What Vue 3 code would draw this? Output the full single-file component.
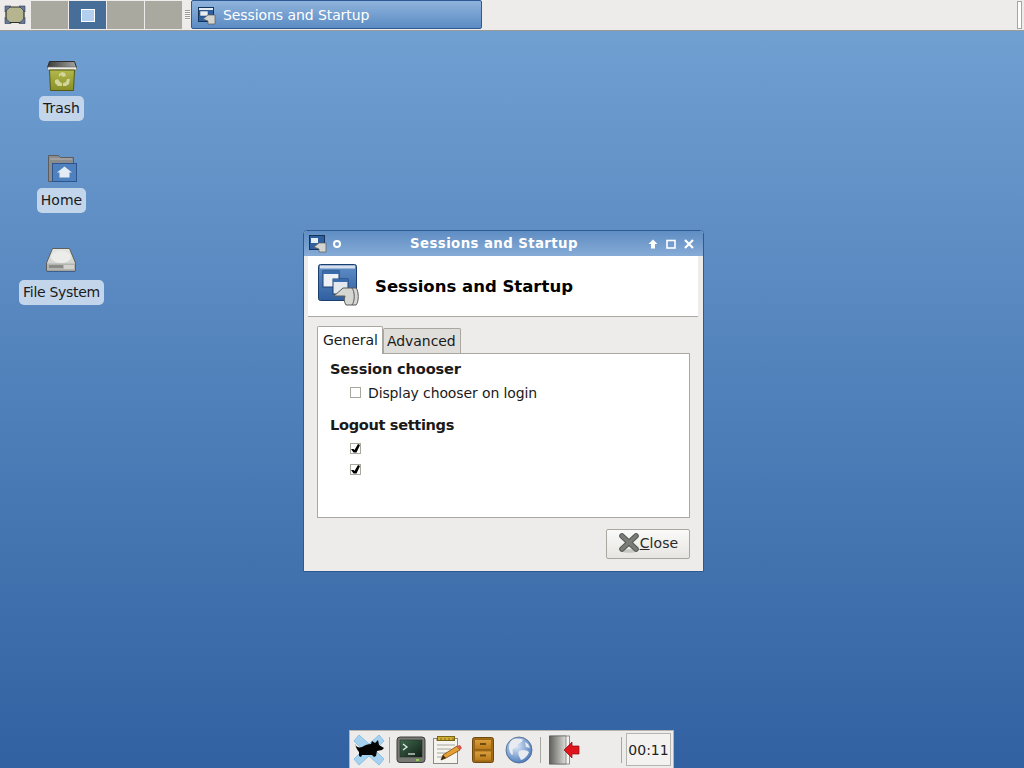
<script setup>
const workspaces = [{ active: false }, { active: true }, { active: false }, { active: false }]

const desktopIcons = [
  { label: 'Trash', kind: 'trash' },
  { label: 'Home', kind: 'home' },
  { label: 'File System', kind: 'disk' }
]
</script>

<template>
  <div class="desktop">
    <!-- top panel -->
    <header class="top-panel">
      <div class="menu-btn">
        <svg width="22" height="20" viewBox="0 0 22 20">
          <rect x="2" y="2" width="18" height="15.500" rx="4" fill="#b5b690" stroke="#2f3128" stroke-width="1.200" />
          <path d="M1 1h6L1 7zM21 1h-6l6 6zM1 18.500h6l-6-6zM21 18.500h-6l6-6z" fill="#66799a" stroke="#2e3a4e" stroke-width=".6" />
        </svg>
      </div>
      <div class="pager">
        <div v-for="(ws, i) in workspaces" :key="i" class="ws" :class="{ active: ws.active }">
          <span v-if="ws.active" class="ws-win"></span>
        </div>
      </div>
      <div class="grip"><i v-for="n in 5" :key="n"></i></div>
      <div class="task">
        <svg width="18" height="18" viewBox="0 0 18 18">
          <rect x=".5" y=".5" width="15" height="14" fill="#2f5f9e" stroke="#16335a" />
          <rect x="1" y="1" width="14" height="2" fill="#e6ebf2" />
          <rect x="2" y="4" width="8" height="5" fill="#e8edf3" stroke="#20406b" stroke-width=".5" />
          <path d="M5 12l5-4h7v9h-7v-3z" fill="#d4d4d0" stroke="#5a5a58" stroke-width=".7" />
        </svg>
        <span>Sessions and Startup</span>
      </div>
      <div class="panel-end"></div>
    </header>

    <!-- desktop icons -->
    <div class="icons">
      <div v-for="icon in desktopIcons" :key="icon.label" class="desk-icon">
        <svg v-if="icon.kind === 'trash'" width="34" height="34" viewBox="0 0 34 34">
          <defs>
            <linearGradient id="bin" x1="0" x2="0" y1="0" y2="1">
              <stop offset="0" stop-color="#b2b84a" />
              <stop offset="1" stop-color="#8a9028" />
            </linearGradient>
            <linearGradient id="binIn" x1="0" x2="1" y1="0" y2="0">
              <stop offset="0" stop-color="#3a3b38" />
              <stop offset="1" stop-color="#a5a6a2" />
            </linearGradient>
          </defs>
          <path d="M4.500 2.500h25l2 6h-29z" fill="url(#binIn)" stroke="#2c2c2a" />
          <rect x="2.500" y="8" width="29" height="3" rx="1" fill="#efefeb" stroke="#6f6f6a" stroke-width=".7" />
          <path d="M4.500 11h25l-1 20.500h-23z" fill="url(#bin)" stroke="#565a12" />
          <path d="M14 15l3-2 3 1 1 3-3 1-2-2-2 2zM10 21l3-1 2 3 2 1v3h-4l-3-3zM25 20l-1 5-3 2h-3v-3l3-1 1-3z" fill="#d2d69a" />
        </svg>
        <svg v-else-if="icon.kind === 'home'" width="34" height="34" viewBox="0 0 34 34">
          <path d="M3.500 4.500h10l2 2h13v24h-25z" fill="#8b8c8d" stroke="#5c5d5e" />
          <path d="M5 8h22" stroke="#b4b4b2" />
          <rect x="7.500" y="12.500" width="24" height="18" fill="#4f81bf" stroke="#2c5590" />
          <path d="M19.500 15.500l7.500 6h-2.500v5h-10v-5H12z" fill="#e3ebf5" />
        </svg>
        <svg v-else width="34" height="34" viewBox="0 0 34 34">
          <defs>
            <linearGradient id="hd" x1="0" x2="0" y1="0" y2="1">
              <stop offset="0" stop-color="#e6e6e3" />
              <stop offset="1" stop-color="#c9c9c5" />
            </linearGradient>
          </defs>
          <path d="M8.500 5.500h17l6 14.500v8h-29v-8z" fill="url(#hd)" stroke="#5e5e5b" stroke-linejoin="round" />
          <ellipse cx="17" cy="14" rx="10" ry="6" fill="#ececea" />
          <path d="M3 20.500h28v7H3z" fill="#b3b3af" />
          <rect x="5" y="22" width="14" height="3" fill="#8a8a86" />
          <path d="M21 22v4M23 22v4M25 22v4M27 22v4M29 22v4" stroke="#f0f0ed" />
          <path d="M3 28.500h28" stroke="#3d5f8e" />
        </svg>
        <span class="desk-label" :class="icon.kind">{{ icon.label }}</span>
      </div>
    </div>

    <!-- settings window -->
    <section class="window">
      <div class="titlebar">
        <div class="tb-left">
          <svg width="18" height="18" viewBox="0 0 18 18">
            <rect x=".5" y=".5" width="15" height="14" fill="#2f5f9e" stroke="#16335a" />
            <rect x="2" y="3" width="7" height="5" fill="#e8edf3" />
            <path d="M5 12l5-4h7v9h-7v-3z" fill="#d4d4d0" stroke="#5a5a58" stroke-width=".7" />
          </svg>
          <span class="tb-dot"></span>
        </div>
        <span class="tb-title">Sessions and Startup</span>
        <div class="tb-right">
          <svg width="12" height="12" viewBox="0 0 12 12"><path d="M6 1.500l4.500 4.500H8v4.500H4V6H1.500z" fill="#fff" /></svg>
          <svg width="12" height="12" viewBox="0 0 12 12"><rect x="2" y="2.500" width="8" height="7.500" fill="none" stroke="#fff" stroke-width="1.600" /></svg>
          <svg width="12" height="12" viewBox="0 0 12 12"><path d="M2 2l8 8M10 2l-8 8" stroke="#fff" stroke-width="2.200" /></svg>
        </div>
      </div>
      <div class="content">
        <div class="head">
          <svg width="44" height="46" viewBox="0 0 44 46">
            <defs>
              <linearGradient id="headBlue" x1="0" x2="0" y1="0" y2="1">
                <stop offset="0" stop-color="#5f8ec8" />
                <stop offset="1" stop-color="#2f5f9f" />
              </linearGradient>
            </defs>
            <rect x="1.500" y="1.500" width="38" height="36" rx="2" fill="url(#headBlue)" stroke="#1d3f6f" />
            <rect x="3" y="2.500" width="35" height="3" fill="#d7e0ea" />
            <rect x="6" y="8" width="16" height="16" fill="#eef1f5" stroke="#1d3f6f" />
            <rect x="6" y="8" width="16" height="3" fill="#3a6cad" />
            <rect x="16" y="16" width="15" height="15" fill="#e4e9ef" stroke="#1d3f6f" />
            <rect x="16" y="16" width="15" height="3" fill="#3a6cad" />
            <path d="M17 33l9-8h13c3 3 3 14 0 17H29c-2-3-2-6-1-9z" fill="#d6d6d2" stroke="#5b5b58" />
            <path d="M35 25c3 4 3 13 0 17" fill="none" stroke="#5b5b58" />
          </svg>
          <h1>Sessions and Startup</h1>
        </div>
        <div class="body">
          <div class="tabs">
            <div class="tab current">General</div>
            <div class="tab">Advanced</div>
          </div>
          <div class="tab-page">
            <h2 class="first-title">Session chooser</h2>
            <div class="check-row">
              <span class="check"></span>
              <span>Display chooser on login</span>
            </div>
            <h2 class="second">Logout settings</h2>
            <div class="check-row first">
              <span class="check on">
                <svg width="9" height="9" viewBox="0 0 9 9"><path d="M0 5h2.500l1 1L7 0l2 1-3.500 7.500h-3z" fill="#000" /></svg>
              </span>
            </div>
            <div class="check-row small">
              <span class="check on">
                <svg width="9" height="9" viewBox="0 0 9 9"><path d="M0 5h2.500l1 1L7 0l2 1-3.500 7.500h-3z" fill="#000" /></svg>
              </span>
            </div>
          </div>
          <div class="actions">
            <button class="close-btn">
              <svg width="22" height="22" viewBox="0 0 22 22">
                <ellipse cx="11" cy="19" rx="8" ry="1.800" fill="#c6c6c2" />
                <path d="M4 4l14 13M18 4L4 17" stroke="#555753" stroke-width="5.600" stroke-linecap="round" />
                <path d="M4 4l14 13M18 4L4 17" stroke="#7a7c77" stroke-width="3.600" stroke-linecap="round" />
              </svg>
              <span class="close-text"><u>C</u>lose</span>
            </button>
          </div>
        </div>
      </div>
    </section>

    <!-- bottom launcher -->
    <footer class="dock">
      <div class="launcher mouse">
        <svg width="32" height="34" viewBox="0 0 32 34">
          <path d="M6 2l10 9L26 2l5 6-9 9 9 9-5 6-10-9-10 9-5-6 9-9-9-9z" fill="#a6d2f0" stroke="#8cc0e4" stroke-linejoin="round" />
          <path d="M2 12c2 2 4 3 7 2 3-2 6-3 9-3l1-3 3 2 3-3 1 5 5 3-2 2-5 1-1 5-2 1-2-2H9l-1 2-2-1v-4c-2-2-3-5-4-8z" fill="#050505" />
        </svg>
      </div>
      <span class="sep"></span>
      <div class="launcher">
        <svg width="30" height="28" viewBox="0 0 30 28">
          <defs>
            <linearGradient id="term" x1="0" x2="1" y1="0" y2="1">
              <stop offset="0" stop-color="#3f6a4e" />
              <stop offset="1" stop-color="#101f16" />
            </linearGradient>
          </defs>
          <rect x="1" y="1" width="28" height="25.500" rx="3" fill="#777973" stroke="#3e3f3c" />
          <rect x="4" y="4" width="22" height="17" fill="url(#term)" stroke="#2b2c2a" stroke-width=".6" />
          <path d="M7 8l4 3-4 3" fill="none" stroke="#e6ecea" stroke-width="1.300" />
          <path d="M12 18h7" stroke="#d8e0dc" stroke-width="1.300" />
          <rect x="20" y="23" width="3" height="2" fill="#8fd14f" />
        </svg>
      </div>
      <div class="launcher">
        <svg width="30" height="30" viewBox="0 0 30 30">
          <rect x="1.500" y="3.500" width="24" height="25" fill="#f5f4ee" stroke="#8b8b85" />
          <rect x="5.500" y="1.500" width="17" height="4" fill="#cfae35" stroke="#7a6418" />
          <path d="M5 6v-3M9 6v-3M13 6v-3M17 6v-3M21 6v-3" stroke="#6c5a18" stroke-width=".8" />
          <path d="M5 10h18M5 14h14M5 18h10M5 22h8" stroke="#a5a59e" />
          <path d="M9 25l2-5 14-9 3 4-14 8z" fill="#e59f33" stroke="#7a4c10" stroke-width=".8" />
          <path d="M25 11l3 4 2-2-2-3z" fill="#d9534f" />
          <path d="M9 25l2-5 3 3z" fill="#3a2c16" />
        </svg>
      </div>
      <div class="launcher">
        <svg width="24" height="28" viewBox="0 0 24 28">
          <defs>
            <linearGradient id="cab" x1="0" x2="0" y1="0" y2="1">
              <stop offset="0" stop-color="#dca03c" />
              <stop offset="1" stop-color="#b9791a" />
            </linearGradient>
          </defs>
          <rect x="1.500" y="1.500" width="21" height="25" rx="2" fill="#a56c16" stroke="#6e4a10" />
          <rect x="3.500" y="3.500" width="17" height="10" fill="url(#cab)" stroke="#8a5c14" stroke-width=".7" />
          <rect x="3.500" y="15" width="17" height="10" fill="url(#cab)" stroke="#8a5c14" stroke-width=".7" />
          <rect x="9" y="7" width="6" height="2" fill="#6e4a10" />
          <rect x="9" y="18.500" width="6" height="2" fill="#6e4a10" />
        </svg>
      </div>
      <div class="launcher">
        <svg width="28" height="28" viewBox="0 0 28 28">
          <defs>
            <radialGradient id="globe" cx=".4" cy=".35" r=".8">
              <stop offset="0" stop-color="#dfeaf7" />
              <stop offset="1" stop-color="#2f66b3" />
            </radialGradient>
          </defs>
          <circle cx="14" cy="14" r="13" fill="url(#globe)" stroke="#4d6688" stroke-width=".8" />
          <path d="M7 4c3-2 7-1 10-1 2 2-1 4-4 5-1 3-3 4-5 5-1 3 1 5-1 6-3-3-5-10 0-15zM14 15c3-2 8-1 10 1-1 3-4 7-8 8-1-3-4-6-2-9zM20 6l3 2 2 4-4-1z" fill="#e8ebef" />
        </svg>
      </div>
      <span class="sep"></span>
      <div class="launcher logout">
        <svg width="32" height="30" viewBox="0 0 32 30">
          <defs>
            <linearGradient id="door" x1="0" x2="1" y1="0" y2="0">
              <stop offset="0" stop-color="#5f605c" />
              <stop offset="1" stop-color="#dcdcd8" />
            </linearGradient>
          </defs>
          <rect x=".5" y="1" width="20" height="28" fill="#f4f4f1" stroke="#777" stroke-width=".8" />
          <path d="M.5 1L17 1v28H.5z" fill="url(#door)" stroke="#555" stroke-width=".6" />
          <path d="M15 15l8-8v4h7v8h-7v4z" fill="#e0141c" stroke="#8e0d12" stroke-width=".7" />
        </svg>
      </div>
      <span class="sep clock-sep"></span>
      <div class="clock">00:11</div>
    </footer>
  </div>
</template>

<style scoped>
.desktop {
  position: relative;
  width: 1024px;
  height: 768px;
  overflow: hidden;
  background: linear-gradient(#709fd2 30px, #3161a1 768px);
  font-family: "DejaVu Sans", sans-serif;
  font-size: 14px;
  color: #1a1a1a;
}

.top-panel {
  display: flex;
  align-items: stretch;
  height: 30px;
  background: #edeceb;
  border-bottom: 1px solid #9a9a96;
}
.menu-btn {
  width: 31px;
  display: flex;
  align-items: center;
  justify-content: center;
  box-sizing: border-box;
  padding-right: 2px;
}
.pager {
  display: flex;
  gap: 1px;
  padding: 1px 0;
}
.ws {
  width: 37px;
  background: #aaa99f;
  display: flex;
  align-items: center;
  justify-content: center;
}
.ws.active {
  background: #466e99;
}
.ws-win {
  width: 12px;
  height: 11px;
  background: #b3cff0;
  border: 1px solid #fff;
}
.grip {
  width: 5px;
  margin: 0 1px 0 3px;
  display: flex;
  flex-direction: column;
  justify-content: center;
}
.grip i {
  display: block;
  height: 1px;
  background: #9a9a96;
  border-bottom: 1px solid #f8f8f6;
}
.task {
  width: 291px;
  margin-bottom: 1px;
  border: 1px solid #2d5a94;
  border-radius: 2px;
  background: linear-gradient(#8fb3dc, #5b8cc4);
  color: #fff;
  display: flex;
  align-items: center;
  gap: 7px;
  padding-left: 6px;
  box-sizing: border-box;
}
.task svg {
  margin-top: 2px;
}
.task span {
  letter-spacing: -.08px;
}
.panel-end {
  margin: 1px 2px 1px auto;
  width: 3px;
  background: #fff;
  border: 1px solid #a5a5a0;
}

.icons {
  position: absolute;
  left: 4px;
  top: 59px;
  width: 115px;
  display: flex;
  flex-direction: column;
  align-items: center;
  gap: 14px;
}
.desk-icon {
  display: flex;
  flex-direction: column;
  align-items: center;
  height: 78px;
  gap: 3px;
}
.desk-label {
  padding: 0 4px;
  height: 25px;
  line-height: 25px;
  border-radius: 5px;
  background: #c3d5ea;
  color: #1a1a1a;
}
.desk-label.disk {
  letter-spacing: -.3px;
}

.window {
  position: absolute;
  left: 303px;
  top: 230px;
  width: 401px;
  height: 342px;
  box-sizing: border-box;
  border: 1px solid #2c5a94;
  border-radius: 4px 4px 0 0;
  background: #edecea;
  display: flex;
  flex-direction: column;
}
.titlebar {
  height: 25px;
  display: flex;
  align-items: center;
  padding: 0 8px 0 5px;
  color: #fff;
  background: linear-gradient(#5f8dc3, #86abd6);
  border-radius: 3px 3px 0 0;
}
.tb-left {
  display: flex;
  align-items: center;
  gap: 6px;
}
.tb-dot {
  width: 4px;
  height: 4px;
  border: 2px solid #fff;
  border-radius: 50%;
}
.tb-title {
  flex: 1;
  text-align: center;
  font-size: 13.33px;
  font-weight: bold;
  letter-spacing: .4px;
}
.tb-right {
  display: flex;
  align-items: center;
  gap: 6px;
}
.content {
  flex: 1;
  display: flex;
  flex-direction: column;
  margin: 0 5px 0 4px;
}
.head {
  height: 60px;
  background: #fff;
  border-bottom: 1px solid #aaa9a2;
  display: flex;
  align-items: center;
  gap: 14px;
  padding-left: 9px;
}
.head h1 {
  margin: 0;
  font-size: 16.5px;
  font-weight: bold;
  color: #000;
}
.body {
  flex: 1;
  padding: 9px 8px 0 9px;
}
.tabs {
  display: flex;
  height: 27px;
  position: relative;
  z-index: 1;
  align-items: flex-end;
}
.tab {
  height: 25px;
  line-height: 25px;
  padding: 0 4px 0 3px;
  box-sizing: border-box;
  border: 1px solid #a8a8a0;
  border-bottom: none;
  background: #dfdedb;
  border-radius: 2px 2px 0 0;
  letter-spacing: -.06px;
}
.tab.current {
  width: 66px;
  height: 28px;
  line-height: 27px;
  padding: 0 0 0 5px;
  background: #fff;
  margin-bottom: -1px;
  letter-spacing: -.05px;
}
.tab-page {
  height: 165px;
  box-sizing: border-box;
  background: #fff;
  border: 1px solid #a8a8a0;
  padding: 6px 12px;
}
.tab-page h2 {
  margin: 0;
  font-size: 14.6px;
  font-weight: bold;
  line-height: 18px;
}
.tab-page h2.first-title {
  letter-spacing: -.15px;
}
.tab-page h2.second {
  margin-top: 13px;
  letter-spacing: -.35px;
}
.check-row {
  display: flex;
  align-items: center;
  gap: 7px;
  padding-left: 20px;
  height: 21px;
  margin-top: 4px;
  letter-spacing: -.12px;
}
.check-row.small {
  margin-top: 0;
}
.check {
  width: 9px;
  height: 9px;
  box-sizing: content-box;
  border: 1px solid #a9a89f;
  background: #fff;
  display: flex;
  align-items: center;
  justify-content: center;
  color: #000;
}
.actions {
  display: flex;
  justify-content: flex-end;
  margin-top: 11px;
}
.close-btn {
  width: 84px;
  height: 30px;
  border: 1px solid #a8a8a0;
  border-radius: 2px;
  background: linear-gradient(#fafaf8, #e6e5e2);
  display: flex;
  align-items: center;
  justify-content: center;
  padding: 0 0 2px 0;
  font: inherit;
  color: #2a2a2a;
}
.close-text {
  letter-spacing: .1px;
}

.dock {
  position: absolute;
  left: 349px;
  bottom: 0;
  width: 325px;
  height: 38px;
  box-sizing: border-box;
  background: #edeceb;
  border: 1px solid #b5b5b0;
  border-bottom: none;
  display: flex;
  align-items: center;
  padding-left: 2px;
}
.launcher {
  width: 36px;
  display: flex;
  justify-content: center;
  align-items: center;
}
.launcher.mouse {
  width: 34px;
}
.launcher.logout {
  width: 36px;
  margin-right: 35px;
  padding-left: 3px;
}
.sep {
  width: 1px;
  height: 26px;
  background: #a8a8a2;
  margin: 0 3px;
}
.clock {
  width: 45px;
  height: 33px;
  margin-left: 1px;
  line-height: 33px;
  text-align: center;
  box-sizing: border-box;
  border: 1px solid #b5b5b0;
  background: #f3f2f0;
  color: #222;
}
</style>

<style>
html, body {
  margin: 0;
  background: #3161a1;
}
</style>
